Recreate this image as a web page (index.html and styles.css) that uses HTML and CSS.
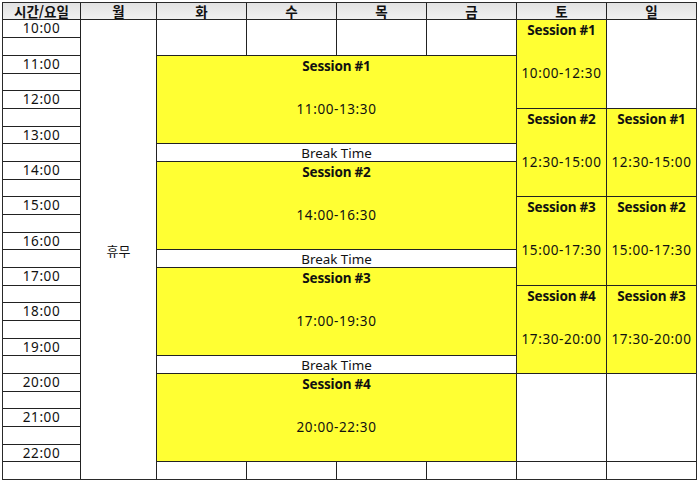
FILE: index.html
```html
<!DOCTYPE html>
<html lang="ko">
<head>
<meta charset="utf-8">
<title>시간표</title>
<link rel="stylesheet" href="styles.css">
</head>
<body>
<div class="sheet">
  <div class="hd c1">시간/요일</div>
  <div class="hd c2">월</div>
  <div class="hd c3">화</div>
  <div class="hd c4">수</div>
  <div class="hd c5">목</div>
  <div class="hd c6">금</div>
  <div class="hd c7">토</div>
  <div class="hd c8">일</div>

  <div class="tm r2">10:00</div>
  <div class="tm r3"></div>
  <div class="tm r4">11:00</div>
  <div class="tm r5"></div>
  <div class="tm r6">12:00</div>
  <div class="tm r7"></div>
  <div class="tm r8">13:00</div>
  <div class="tm r9"></div>
  <div class="tm r10">14:00</div>
  <div class="tm r11"></div>
  <div class="tm r12">15:00</div>
  <div class="tm r13"></div>
  <div class="tm r14">16:00</div>
  <div class="tm r15"></div>
  <div class="tm r16">17:00</div>
  <div class="tm r17"></div>
  <div class="tm r18">18:00</div>
  <div class="tm r19"></div>
  <div class="tm r20">19:00</div>
  <div class="tm r21"></div>
  <div class="tm r22">20:00</div>
  <div class="tm r23"></div>
  <div class="tm r24">21:00</div>
  <div class="tm r25"></div>
  <div class="tm r26">22:00</div>
  <div class="tm r27"></div>

  <div class="off">휴무</div>

  <div class="blank c3 top"></div>
  <div class="blank c4 top"></div>
  <div class="blank c5 top"></div>
  <div class="blank c6 top"></div>

  <div class="ses wk s1"><b>Session #1</b><br><br><span class="t">11:00-13:30</span></div>
  <div class="brk b1">Break Time</div>
  <div class="ses wk s2"><b>Session #2</b><br><br><span class="t">14:00-16:30</span></div>
  <div class="brk b2">Break Time</div>
  <div class="ses wk s3"><b>Session #3</b><br><br><span class="t">17:00-19:30</span></div>
  <div class="brk b3">Break Time</div>
  <div class="ses wk s4"><b>Session #4</b><br><br><span class="t">20:00-22:30</span></div>

  <div class="ses c7 q1"><b>Session #1</b><br><br><span class="t">10:00-12:30</span></div>
  <div class="ses c7 q2"><b>Session #2</b><br><br><span class="t">12:30-15:00</span></div>
  <div class="ses c7 q3"><b>Session #3</b><br><br><span class="t">15:00-17:30</span></div>
  <div class="ses c7 q4"><b>Session #4</b><br><br><span class="t">17:30-20:00</span></div>
  <div class="blank c7 q5"></div>

  <div class="blank c8 q1"></div>
  <div class="ses c8 q2"><b>Session #1</b><br><br><span class="t">12:30-15:00</span></div>
  <div class="ses c8 q3"><b>Session #2</b><br><br><span class="t">15:00-17:30</span></div>
  <div class="ses c8 q4"><b>Session #3</b><br><br><span class="t">17:30-20:00</span></div>
  <div class="blank c8 q5"></div>

  <div class="blank c3 bot"></div>
  <div class="blank c4 bot"></div>
  <div class="blank c5 bot"></div>
  <div class="blank c6 bot"></div>
  <div class="blank c7 bot"></div>
  <div class="blank c8 bot"></div>
</div>
</body>
</html>
```

FILE: styles.css
```css
html, body {
  margin: 0;
  padding: 0;
  background: #fff;
}

body {
  font-family: "Noto Sans", "Noto Sans CJK KR", sans-serif;
  color: #111;
}

.sheet {
  margin: 2px 0 0 2px;
  width: 693px;
  display: grid;
  grid-template-columns: 77px 75px 89px 89px 89px 89px 89px 89px;
  grid-template-rows:
    16px
    17px 17px 17px 16px 17px
    17px 16px 17px 17px 16px
    17px 17px 16px 17px 17px
    16px 17px 17px 16px 17px
    17px 16px 17px 17px 16px
    17px;
  gap: 1px;
  border: 1px solid #2a2a2a;
  background: #222;
}

.sheet > div {
  background: #fff;
  text-align: center;
  white-space: nowrap;
}

.hd {
  grid-row: 1;
  background: linear-gradient(to bottom, #e2e2e2, #f0f0f0) !important;
  font-family: "Noto Sans CJK KR", sans-serif;
  font-weight: 700;
  font-size: 13.5px;
  line-height: 16px;
  display: flex;
  align-items: center;
  justify-content: center;
  color: #111;
}

.c1 { grid-column: 1; }
.c2 { grid-column: 2; }
.c3 { grid-column: 3; }
.c4 { grid-column: 4; }
.c5 { grid-column: 5; }
.c6 { grid-column: 6; }
.c7 { grid-column: 7; }
.c8 { grid-column: 8; }

.tm {
  grid-column: 1;
  font-size: 13.5px;
  letter-spacing: 0.6px;
  display: flex;
  align-items: center;
  justify-content: center;
  line-height: 1;
  padding-top: 1px;
}

.r2 { grid-row: 2; } .r3 { grid-row: 3; } .r4 { grid-row: 4; } .r5 { grid-row: 5; }
.r6 { grid-row: 6; } .r7 { grid-row: 7; } .r8 { grid-row: 8; } .r9 { grid-row: 9; }
.r10 { grid-row: 10; } .r11 { grid-row: 11; } .r12 { grid-row: 12; } .r13 { grid-row: 13; }
.r14 { grid-row: 14; } .r15 { grid-row: 15; } .r16 { grid-row: 16; } .r17 { grid-row: 17; }
.r18 { grid-row: 18; } .r19 { grid-row: 19; } .r20 { grid-row: 20; } .r21 { grid-row: 21; }
.r22 { grid-row: 22; } .r23 { grid-row: 23; } .r24 { grid-row: 24; } .r25 { grid-row: 25; }
.r26 { grid-row: 26; } .r27 { grid-row: 27; }

.off {
  grid-column: 2;
  grid-row: 2 / 28;
  display: flex;
  align-items: center;
  justify-content: center;
  font-family: "Noto Sans CJK KR", sans-serif;
  font-size: 13px;
  padding-top: 2px;
}

.top { grid-row: 2 / 4; }
.bot { grid-row: 27; }

.ses {
  background: #ffff33 !important;
  font-size: 13.5px;
  line-height: 21.5px;
  color: #111;
}

.ses b {
  font-weight: 700;
  letter-spacing: -0.2px;
}

.ses .t {
  font-size: 13.5px;
  letter-spacing: 0.6px;
}

.wk { grid-column: 3 / 7; }
.s1 { grid-row: 4 / 9; }
.s2 { grid-row: 10 / 15; }
.s3 { grid-row: 16 / 21; }
.s4 { grid-row: 22 / 27; }

.brk {
  grid-column: 3 / 7;
  font-size: 13.4px;
  line-height: 17px;
  padding-top: 1px;
}
.b1 { grid-row: 9; }
.b2 { grid-row: 15; }
.b3 { grid-row: 21; }

.q1 { grid-row: 2 / 7; }
.q2 { grid-row: 7 / 12; }
.q3 { grid-row: 12 / 17; }
.q4 { grid-row: 17 / 22; }
.q5 { grid-row: 22 / 27; }
```
